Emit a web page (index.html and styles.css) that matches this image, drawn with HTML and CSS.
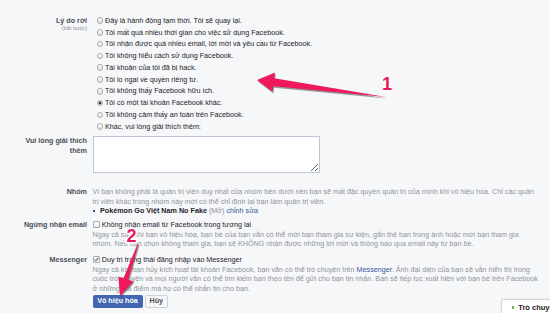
FILE: index.html
```html
<!DOCTYPE html>
<html lang="vi">
<head>
<meta charset="utf-8">
<title>Vô hiệu hóa tài khoản</title>
<link rel="stylesheet" href="styles.css">
</head>
<body>
<div class="form">
  <div class="row row-reason">
    <div class="label">Lý do rời<span class="req">(bắt buộc)</span></div>
    <ul class="radios">
      <li><span class="radio"></span>Đây là hành động tạm thời. Tôi sẽ quay lại.</li>
      <li><span class="radio"></span>Tôi mất quá nhiều thời gian cho việc sử dụng Facebook.</li>
      <li><span class="radio"></span>Tôi nhận được quá nhiều email, lời mời và yêu cầu từ Facebook.</li>
      <li><span class="radio"></span>Tôi không hiểu cách sử dụng Facebook.</li>
      <li><span class="radio"></span>Tài khoản của tôi đã bị hack.</li>
      <li><span class="radio"></span>Tôi lo ngại về quyền riêng tư.</li>
      <li><span class="radio"></span>Tôi không thấy Facebook hữu ích.</li>
      <li><span class="radio on"></span>Tôi có một tài khoản Facebook khác.</li>
      <li><span class="radio"></span>Tôi không cảm thấy an toàn trên Facebook.</li>
      <li><span class="radio"></span>Khác, vui lòng giải thích thêm:</li>
    </ul>
  </div>

  <div class="row row-explain">
    <div class="label">Vui lòng giải thích<br>thêm</div>
    <textarea class="explain"></textarea>
  </div>

  <div class="row row-group">
    <div class="label">Nhóm</div>
    <div class="field">
      <div class="desc">Vì bạn không phải là quản trị viên duy nhất của nhóm bên dưới nên bạn sẽ mất đặc quyền quản trị của mình khi vô hiệu hóa. Chỉ các quản<br>trị viên khác trong nhóm này mới có thể chỉ định lại bạn làm quản trị viên.</div>
      <div class="group-item"><span class="bullet"></span><b>Pokémon Go Việt Nam No Fake</b>&nbsp;<span class="muted">(Mở)</span>&nbsp;<a class="link">chỉnh sửa</a></div>
    </div>
  </div>

  <div class="row row-email">
    <div class="label">Ngừng nhận email</div>
    <div class="field">
      <div class="check-line"><span class="checkbox"></span>Không nhận email từ Facebook trong tương lai</div>
      <div class="desc">Ngay cả sau khi bạn vô hiệu hóa, bạn bè của bạn vẫn có thể mời bạn tham gia sự kiện, gắn thẻ bạn trong ảnh hoặc mời bạn tham gia<br>nhóm. Nếu bạn chọn không tham gia, bạn sẽ KHÔNG nhận được những lời mời và thông báo qua email này từ bạn bè.</div>
    </div>
  </div>

  <div class="row row-messenger">
    <div class="label">Messenger</div>
    <div class="field">
      <div class="check-line"><span class="checkbox on"><svg viewBox="0 0 8 8" width="7" height="7"><path d="M1.3 4.1 L3.1 5.9 L6.9 1.4" fill="none" stroke="#1d2129" stroke-width="1.5"/></svg></span>Duy trì trạng thái đăng nhập vào Messenger</div>
      <div class="desc">Ngay cả khi bạn hủy kích hoạt tài khoản Facebook, bạn vẫn có thể trò chuyện trên <a class="link">Messenger</a>. Ảnh đại diện của bạn sẽ vẫn hiển thị trong<br>cuộc trò chuyện và mọi người vẫn có thể tìm kiếm bạn theo tên để gửi cho bạn tin nhắn. Bạn sẽ tiếp tục xuất hiện với bạn bè trên Facebook<br>ở những địa điểm mà họ có thể nhắn tin cho bạn.</div>
    </div>
  </div>

  <div class="row row-buttons">
    <div class="label"></div>
    <div class="buttons">
      <button class="btn primary">Vô hiệu hóa</button>
      <button class="btn secondary">Hủy</button>
    </div>
  </div>
</div>

<div class="chat"><span class="dot"></span>Trò chuyện</div>

<svg class="annot" viewBox="0 0 550 313" width="550" height="313">
  <defs>
    <filter id="sh" x="-20%" y="-20%" width="140%" height="140%">
      <feGaussianBlur stdDeviation="0.7"/>
    </filter>
  </defs>
  <polygon points="257,80 275,72.6 274.3,78.2 386,97 273.3,86.2 272.6,91.8" fill="#3f5249" opacity="0.55" transform="translate(0.8,1.6)" filter="url(#sh)"/>
  <polygon points="257,80 275,72.6 274.3,78.2 386,97 273.3,86.2 272.6,91.8" fill="#ef1a5c"/>
  <polygon points="138.5,244 137.5,244 123.5,278.2 118.3,276.4 120,296 133.5,281.6 128.3,279.8" fill="#3f5249" opacity="0.55" transform="translate(1,1.2)" filter="url(#sh)"/>
  <polygon points="138.5,244 137.5,244 123.5,278.2 118.3,276.4 120,296 133.5,281.6 128.3,279.8" fill="#ef1a5c"/>
  <text class="num" x="387" y="89.5" text-anchor="middle" transform="translate(0.8,1.2)" fill="#55605a" stroke="#55605a" opacity="0.5">1</text>
  <text class="num" x="387" y="89.5" text-anchor="middle">1</text>
  <text class="num" x="131.5" y="241.5" text-anchor="middle" transform="translate(0.8,1.2)" fill="#55605a" stroke="#55605a" opacity="0.5">2</text>
  <text class="num" x="131.5" y="241.5" text-anchor="middle">2</text>
</svg>
</body>
</html>
```

FILE: styles.css
```css
* { box-sizing: border-box; }
html, body { margin: 0; padding: 0; }
body {
  position: relative;
  width: 550px;
  height: 313px;
  overflow: hidden;
  background: #f6f7f9;
  font-family: "Liberation Sans", Arial, sans-serif;
  font-size: 7.2px;
  color: #1d2129;
}

.form {
  display: flex;
  flex-direction: column;
  padding-top: 14.8px;
}

.row {
  display: grid;
  grid-template-columns: 87px 1fr;
  column-gap: 5.5px;
  align-items: start;
}

.label {
  text-align: right;
  font-weight: bold;
  color: #4b4f56;
  line-height: 9.5px;
  white-space: nowrap;
}

.row-reason .label { line-height: 11.78px; }

.req {
  display: block;
  font-weight: normal;
  font-size: 5.6px;
  line-height: 6px;
  margin-top: -1.3px;
  color: #90949c;
}

.radios {
  list-style: none;
  margin: 0;
  padding: 0;
}

.radios li {
  display: flex;
  align-items: center;
  height: 11.78px;
  line-height: 11.78px;
  white-space: nowrap;
}

.radio {
  flex: none;
  width: 6.5px;
  height: 6.5px;
  margin-left: 4.2px;
  margin-right: 1.8px;
  border-radius: 50%;
  border: 1px solid #a7abb0;
  background: linear-gradient(#ffffff, #dfe1e5);
}

.radio.on {
  background: radial-gradient(circle, #2f3338 0, #2f3338 1.3px, #f4f5f7 1.7px);
}

.row-explain { margin-top: 3.4px; }
.row-explain .label { line-height: 10px; }

.explain {
  display: block;
  width: 227px;
  height: 37px;
  margin: 0;
  padding: 2px;
  border: 1px solid #bdc7d8;
  background: #ffffff;
  resize: both;
  font: inherit;
}

.row-group { margin-top: 14.2px; }
.row-email { margin-top: 4.5px; }
.row-messenger { margin-top: 6.5px; }
.row-buttons { margin-top: 2.4px; }

.desc {
  color: #90949c;
  line-height: 9.5px;
  white-space: nowrap;
}

.group-item {
  display: flex;
  align-items: center;
  line-height: 9.5px;
  white-space: nowrap;
}

.group-item b { color: #1d2129; }

.bullet {
  flex: none;
  width: 2.2px;
  height: 2.2px;
  background: #365899;
  margin-right: 5.3px;
}

.muted { color: #90949c; }

.link {
  color: #365899;
  text-decoration: none;
}

.check-line {
  display: flex;
  align-items: center;
  line-height: 9.5px;
  white-space: nowrap;
}

.checkbox {
  flex: none;
  display: flex;
  align-items: center;
  justify-content: center;
  width: 7px;
  height: 7px;
  margin-right: 2.2px;
  border: 1px solid #a7abb0;
  border-radius: 1px;
  background: linear-gradient(#ffffff, #e6e8eb);
}

.checkbox.on svg { display: block; margin-top: -1px; }

.buttons {
  display: flex;
  gap: 2.3px;
}

.btn {
  height: 12.6px;
  margin: 0;
  padding: 0;
  border: 1px solid;
  border-radius: 1.5px;
  font-family: inherit;
  font-size: 7.2px;
  font-weight: bold;
  line-height: 10.6px;
  text-align: center;
}

.primary {
  width: 50px;
  background: #4267b2;
  border-color: #4267b2;
  color: #ffffff;
}

.secondary {
  width: 23px;
  background: #f6f7f9;
  border-color: #ced0d4;
  color: #4b4f56;
}

.chat {
  position: absolute;
  left: 500.7px;
  top: 299px;
  width: 60px;
  height: 20px;
  display: flex;
  align-items: flex-start;
  padding-left: 10px;
  background: #ffffff;
  border: 1px solid #d3d6db;
  border-radius: 2px 0 0 0;
  box-shadow: 0 0 2px rgba(0, 0, 0, 0.12);
  font-size: 7.5px;
  font-weight: bold;
  line-height: 15.6px;
  white-space: nowrap;
  color: #1d2129;
}

.dot {
  flex: none;
  width: 2.8px;
  height: 2.8px;
  margin-top: 6.4px;
  margin-right: 3.8px;
  border-radius: 50%;
  background: #42b72a;
}

.annot {
  position: absolute;
  left: 0;
  top: 0;
  pointer-events: none;
}

.num {
  font-family: "Liberation Sans", Arial, sans-serif;
  font-size: 18px;
  font-weight: bold;
  fill: #e8175d;
  stroke: #ffffff;
  stroke-width: 2.4px;
  paint-order: stroke;
  stroke-linejoin: round;
}
```
